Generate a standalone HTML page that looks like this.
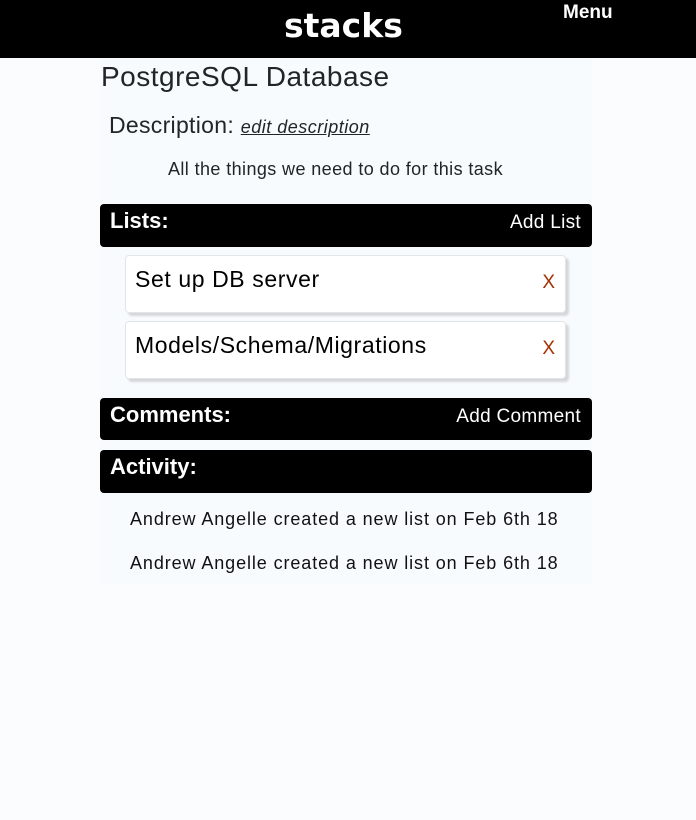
<!DOCTYPE html>
<html><head><meta charset="utf-8"><style>
*{margin:0;padding:0;box-sizing:border-box}
body{width:696px;height:820px;background:#fbfcfe;font-family:"Liberation Sans",sans-serif;color:#212529;position:relative;overflow:hidden}
.a{position:absolute;white-space:nowrap}
.hdr{left:0;top:0;width:696px;height:58px;background:#000}
.main{left:100px;top:58px;width:492px;height:526px;background:#f8fbfe}
.bar{left:100px;width:492px;height:43px;background:#000;border-radius:4px;color:#fff}
.bar .t{position:absolute;left:10px;top:4px;font-size:22px;font-weight:bold}
.bar .r{position:absolute;right:11px;top:8px;font-size:19px;letter-spacing:0.3px}
.card{left:125px;width:441px;background:#fff;border:1px solid #e2e6ea;border-radius:4px;box-shadow:3px 3px 2px #d5d6d8}
.card .t{position:absolute;left:9px;top:10px;font-size:23px;color:#000;letter-spacing:0.6px}
.card .x{position:absolute;right:10px;top:16px;font-size:19px;color:#a33200}
</style></head><body>
<div class="a hdr"></div>
<div class="a" style="left:284px;top:6px;font-size:33px;font-weight:900;color:#fff;letter-spacing:0px;font-family:'DejaVu Sans',sans-serif">stacks</div>
<div class="a" style="left:563px;top:2px;font-size:19px;font-weight:bold;color:#fff">Menu</div>
<div class="a main"></div>
<div class="a" style="left:101px;top:61px;font-size:28px;letter-spacing:0.5px">PostgreSQL Database</div>
<div class="a" style="left:109px;top:112px;font-size:23px;letter-spacing:0.3px">Description: <span style="font-size:18px;font-style:italic;text-decoration:underline;letter-spacing:0.5px">edit description</span></div>
<div class="a" style="left:168px;top:159px;font-size:18px;letter-spacing:0.4px">All the things we need to do for this task</div>
<div class="a bar" style="top:204px"><span class="t">Lists:</span><span class="r">Add List</span></div>
<div class="a card" style="top:255px;height:58px"><span class="t">Set up DB server</span><span class="x">X</span></div>
<div class="a card" style="top:321px;height:58px"><span class="t">Models/Schema/Migrations</span><span class="x">X</span></div>
<div class="a bar" style="top:398px;height:42px"><span class="t">Comments:</span><span class="r">Add Comment</span></div>
<div class="a bar" style="top:450px"><span class="t">Activity:</span></div>
<div class="a" style="left:130px;top:509px;font-size:18px;color:#111;letter-spacing:0.9px">Andrew Angelle created a new list on Feb 6th 18</div>
<div class="a" style="left:130px;top:553px;font-size:18px;color:#111;letter-spacing:0.9px">Andrew Angelle created a new list on Feb 6th 18</div>
</body></html>
